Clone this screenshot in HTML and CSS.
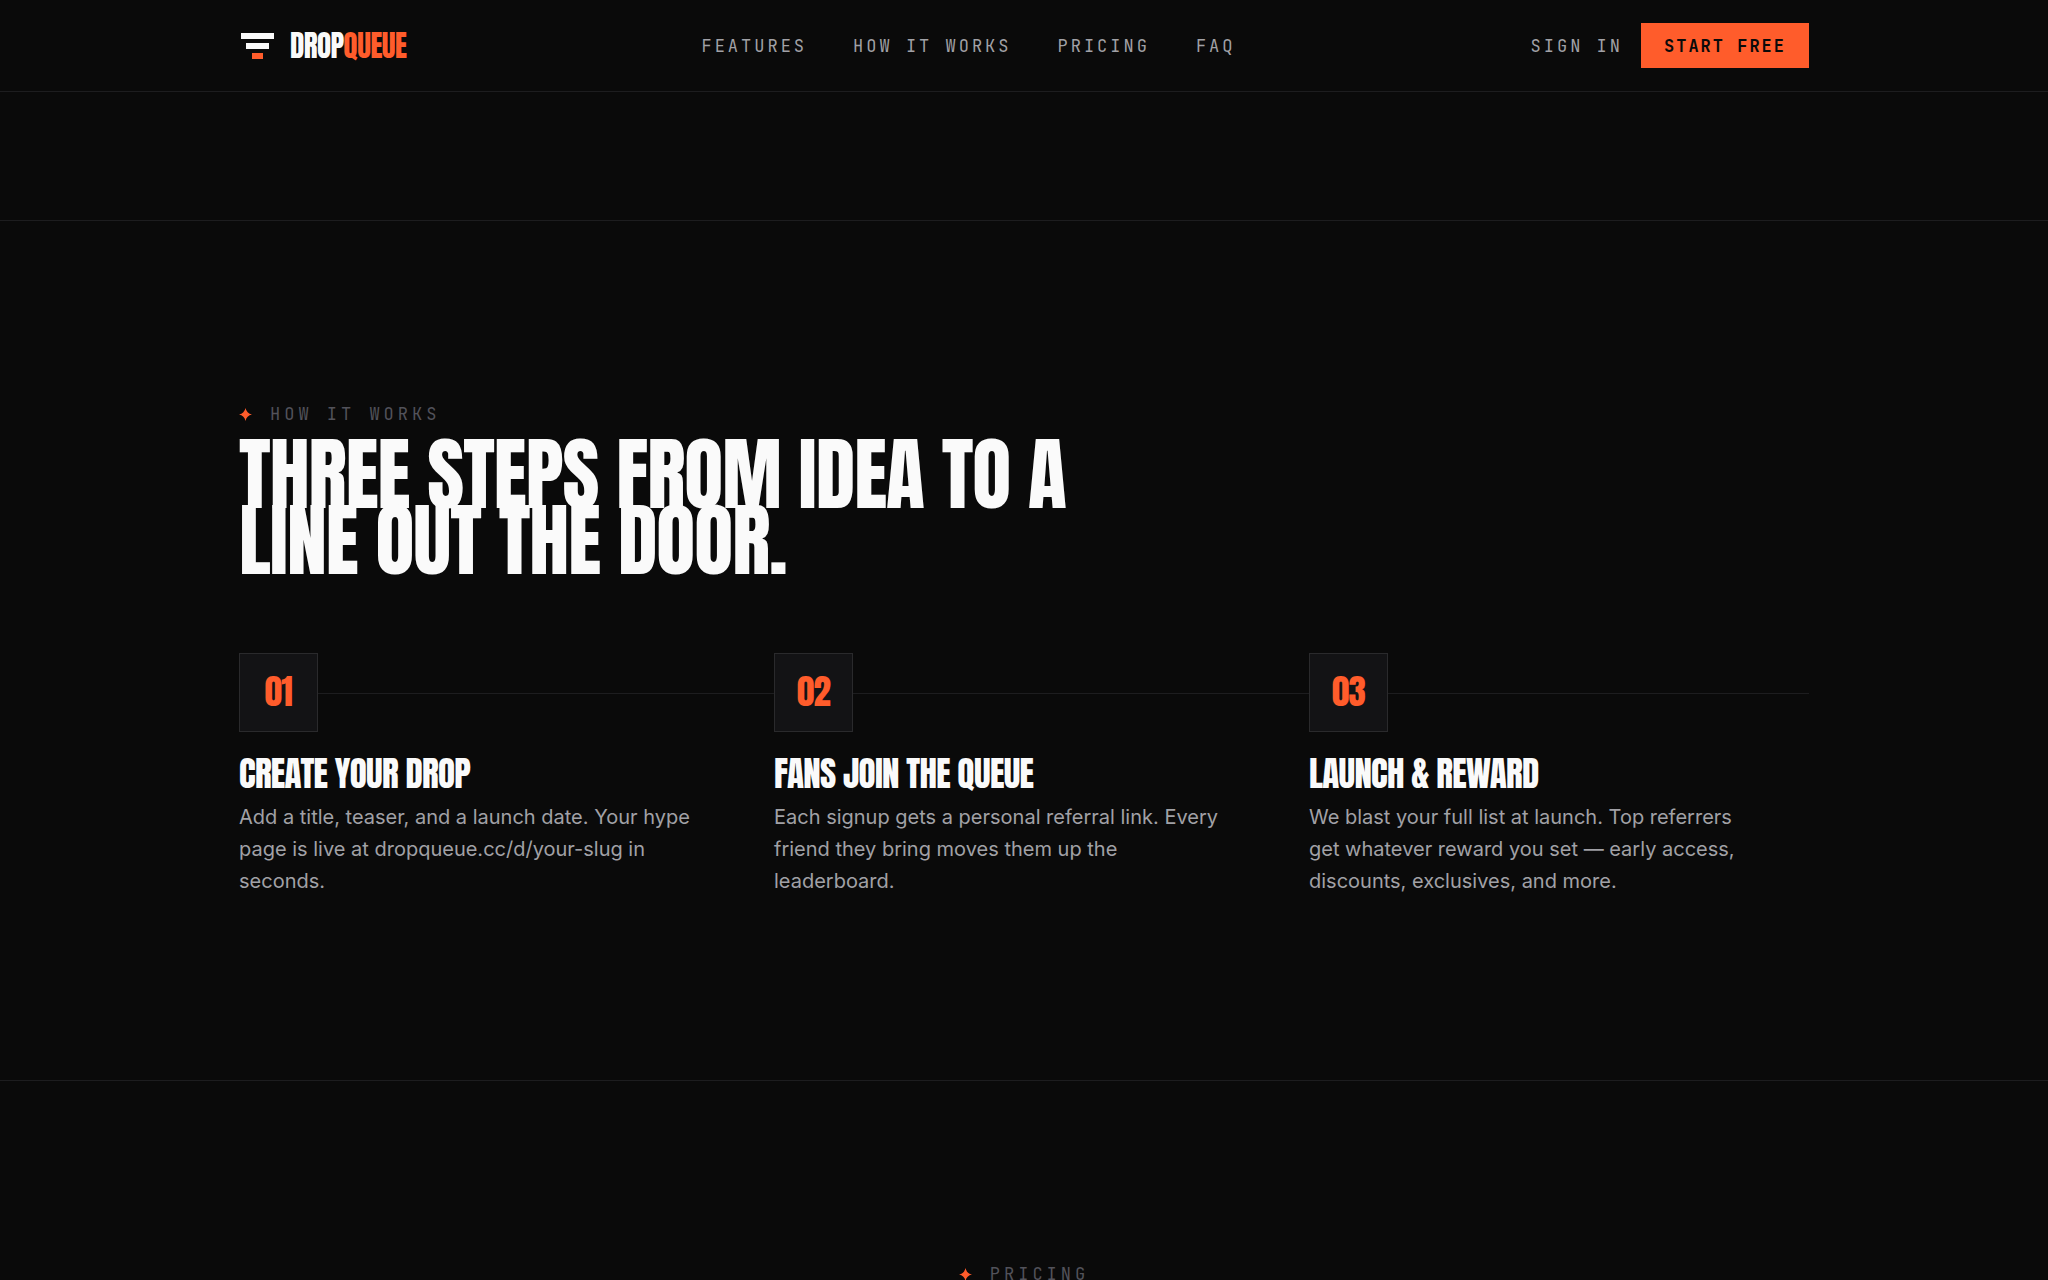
FILE: index.html
```html
<!DOCTYPE html>
<html lang="en">
<head>
  <meta charset="UTF-8">
  <meta name="viewport" content="width=device-width, initial-scale=1.0">
  <title>DropQueue</title>
  <link rel="stylesheet" href="styles.css">
</head>
<body>

<header class="site-header">
  <div class="container header-row">
    <a href="#" class="logo">
      <svg class="logo-mark" viewBox="0 0 36 36" aria-hidden="true">
        <rect x="2" y="5" width="33" height="6" fill="#fafafa"/>
        <rect x="7" y="15" width="23" height="6" fill="#fafafa"/>
        <rect x="13" y="25" width="11" height="6" fill="#ff5c2b"/>
      </svg>
      <span class="logo-text">DROP<span class="accent">QUEUE</span></span>
    </a>
    <nav class="nav">
      <a href="#features">FEATURES</a>
      <a href="#how">HOW IT WORKS</a>
      <a href="#pricing">PRICING</a>
      <a href="#faq">FAQ</a>
    </nav>
    <div class="actions">
      <a href="#signin" class="sign-in">SIGN IN</a>
      <button type="button" class="btn">START FREE</button>
    </div>
  </div>
</header>

<main>
  <section class="spacer" id="features"></section>

  <section class="section" id="how">
    <div class="container">
      <p class="eyebrow">
        <svg class="star" viewBox="0 0 12 12" aria-hidden="true"><path d="M6 0 Q7 5 12 6 Q7 7 6 12 Q5 7 0 6 Q5 5 6 0Z"/></svg>
        HOW IT WORKS
      </p>
      <h2 class="title">THREE STEPS FROM IDEA TO A<br>LINE OUT THE DOOR.</h2>

      <div class="steps">
        <div class="step">
          <div class="step-num">01</div>
          <h3>CREATE YOUR DROP</h3>
          <p>Add a title, teaser, and a launch date. Your hype page is live at dropqueue.cc/d/your-slug in seconds.</p>
        </div>
        <div class="step">
          <div class="step-num">02</div>
          <h3>FANS JOIN THE QUEUE</h3>
          <p>Each signup gets a personal referral link. Every friend they bring moves them up the leaderboard.</p>
        </div>
        <div class="step">
          <div class="step-num">03</div>
          <h3>LAUNCH &amp; REWARD</h3>
          <p>We blast your full list at launch. Top referrers get whatever reward you set — early access, discounts, exclusives, and more.</p>
        </div>
      </div>
    </div>
  </section>

  <section class="section" id="pricing">
    <div class="container">
      <p class="eyebrow centered">
        <svg class="star" viewBox="0 0 12 12" aria-hidden="true"><path d="M6 0 Q7 5 12 6 Q7 7 6 12 Q5 7 0 6 Q5 5 6 0Z"/></svg>
        PRICING
      </p>
    </div>
  </section>
</main>

</body>
</html>
```
FILE: styles.css
```css
:root {
  --bg: #0a0a0a;
  --line: #1d1d1f;
  --accent: #ff5c2b;
  --display: Anton, Impact, "DejaVu Sans Condensed", sans-serif;
  --mono: "JetBrains Mono", "DejaVu Sans Mono", monospace;
}
* {
  margin: 0;
  padding: 0;
  box-sizing: border-box;
}
body {
  background: var(--bg);
  color: #fafafa;
  font-family: Inter, sans-serif;
}
a {
  color: inherit;
  text-decoration: none;
}
.container {
  max-width: 1634px;
  margin: 0 auto;
  padding: 0 32px;
}

/* Header */
.site-header {
  border-bottom: 1px solid var(--line);
}
.header-row {
  display: flex;
  justify-content: space-between;
  align-items: center;
  height: 91px;
}
.logo {
  display: flex;
  align-items: center;
  gap: 15px;
}
.logo-mark {
  width: 36px;
  height: 36px;
}
.logo-text {
  font-family: var(--display);
  font-size: 29px;
  font-weight: 400;
  line-height: 34px;
  letter-spacing: -0.02em;
}
.accent {
  color: var(--accent);
}
.nav {
  display: flex;
  gap: 46px;
}
.nav a, .sign-in {
  font-family: var(--mono);
  font-size: 17px;
  letter-spacing: 3px;
  color: #a1a1a6;
}
.actions {
  display: flex;
  align-items: center;
  gap: 18px;
}
.btn {
  height: 45px;
  padding: 0 23px;
  border: none;
  background: var(--accent);
  color: var(--bg);
  font-family: var(--mono);
  font-size: 17px;
  font-weight: 700;
  letter-spacing: 2px;
  cursor: pointer;
}

/* Sections */
.spacer {
  height: 128px;
}
.section {
  padding: 180px 0 183px;
  border-top: 1px solid var(--line);
}
.eyebrow {
  display: flex;
  align-items: center;
  gap: 18px;
  font-family: var(--mono);
  font-size: 17px;
  line-height: 26px;
  letter-spacing: 4px;
  color: #52525a;
}
.centered {
  justify-content: center;
}
.star {
  width: 13px;
  height: 13px;
  fill: var(--accent);
}
.title {
  margin: 14px 0 80px;
  font-family: var(--display);
  font-size: 80px;
  font-weight: 400;
  line-height: 66px;
  letter-spacing: -1px;
}

/* Steps */
.steps {
  position: relative;
  display: grid;
  grid-template-columns: repeat(3, 1fr);
  gap: 35px;
}
.steps::before {
  content: "";
  position: absolute;
  top: 40px;
  left: 0;
  right: 0;
  height: 1px;
  background: var(--line);
}
.step {
  position: relative;
}
.step-num {
  display: flex;
  justify-content: center;
  align-items: center;
  width: 79px;
  height: 79px;
  padding-bottom: 2px;
  border: 1px solid #2a2a2c;
  background: #131315;
  color: var(--accent);
  font-family: var(--display);
  font-size: 35px;
  line-height: 48px;
  letter-spacing: -0.02em;
}
.step h3 {
  margin-top: 18px;
  font-family: var(--display);
  font-size: 35px;
  font-weight: 400;
  line-height: 48px;
  letter-spacing: -0.02em;
}
.step p {
  margin-top: 3px;
  padding-right: 48px;
  font-size: 20px;
  line-height: 32px;
  color: #a1a1a6;
}
```
